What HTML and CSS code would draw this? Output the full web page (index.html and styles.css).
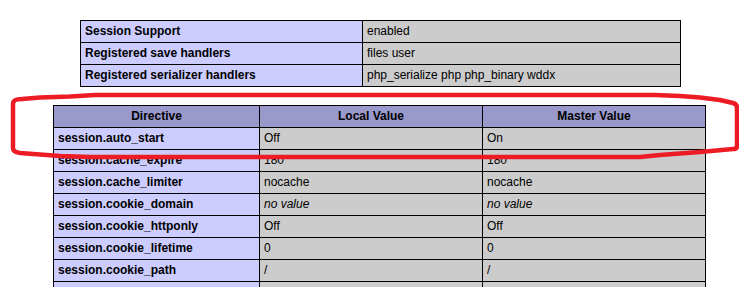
FILE: index.html
```html
<!DOCTYPE html>
<html>
<head>
<meta charset="utf-8">
<title>phpinfo() - session</title>
<link rel="stylesheet" href="styles.css">
</head>
<body>
<div class="page">
  <table class="info">
    <colgroup><col class="c-key"><col class="c-val"></colgroup>
    <tr><td class="e">Session Support </td><td class="v">enabled </td></tr>
    <tr><td class="e">Registered save handlers </td><td class="v">files user </td></tr>
    <tr><td class="e">Registered serializer handlers </td><td class="v">php_serialize php php_binary wddx </td></tr>
  </table>

  <table class="ini">
    <colgroup><col class="c-dir"><col class="c-local"><col class="c-master"></colgroup>
    <tr class="h"><th>Directive</th><th>Local Value</th><th>Master Value</th></tr>
    <tr><td class="e">session.auto_start</td><td class="v">Off</td><td class="v">On</td></tr>
    <tr><td class="e">session.cache_expire</td><td class="v">180</td><td class="v">180</td></tr>
    <tr><td class="e">session.cache_limiter</td><td class="v">nocache</td><td class="v">nocache</td></tr>
    <tr><td class="e">session.cookie_domain</td><td class="v"><i>no value</i></td><td class="v"><i>no value</i></td></tr>
    <tr><td class="e">session.cookie_httponly</td><td class="v">Off</td><td class="v">Off</td></tr>
    <tr><td class="e">session.cookie_lifetime</td><td class="v">0</td><td class="v">0</td></tr>
    <tr><td class="e">session.cookie_path</td><td class="v">/</td><td class="v">/</td></tr>
    <tr><td class="e">&nbsp;</td><td class="v">&nbsp;</td><td class="v">&nbsp;</td></tr>
  </table>

  <svg class="mark" width="759" height="200" viewBox="0 0 759 200">
    <path d="M13,104 C13,100 16,99 22,99 L40,97.5 L70,96.5 L95,95 L655,95 L680,96 L700,97.5 L720,100 L733,103 Q737,104 737,108 L737,146 Q737,149 733,149 L700,152 L660,155 L640,157 L90,157 L60,156 L40,154.5 L20,153 Q13,152 13,148 Z"
          fill="none" stroke="#ed1c24" stroke-width="4.5" stroke-linejoin="round"/>
  </svg>
</div>
</body>
</html>
```
FILE: styles.css
```css
html, body {
  margin: 0;
  padding: 0;
  background: #ffffff;
  overflow: hidden;
}

.page {
  position: relative;
  width: 759px;
  padding-top: 20px;
  font-family: "Liberation Sans", Arial, sans-serif;
  color: #000000;
}

table {
  border-collapse: collapse;
  table-layout: fixed;
  margin: 0 auto;
}

td, th {
  border: 1px solid #000000;
  font-size: 12px;
  line-height: 15px;
  padding: 3px 4px;
  vertical-align: baseline;
  text-align: left;
  white-space: nowrap;
  overflow: hidden;
}

.info { width: 600px; margin-left: 80px; }
.info .c-key { width: 282px; }
.info .c-val { width: 318px; }

.ini { width: 652px; margin-top: 18px; margin-left: 53px; }
.ini .c-dir { width: 206px; }
.ini .c-local { width: 223px; }
.ini .c-master { width: 223px; }

.e {
  background-color: #ccccff;
  font-weight: bold;
}

.v {
  background-color: #cccccc;
}

.h th {
  background-color: #9999cc;
  font-weight: bold;
  text-align: center;
}

/* hand-drawn highlight around the first ini rows */
.mark {
  position: absolute;
  left: 0;
  top: 0;
  pointer-events: none;
}
```
